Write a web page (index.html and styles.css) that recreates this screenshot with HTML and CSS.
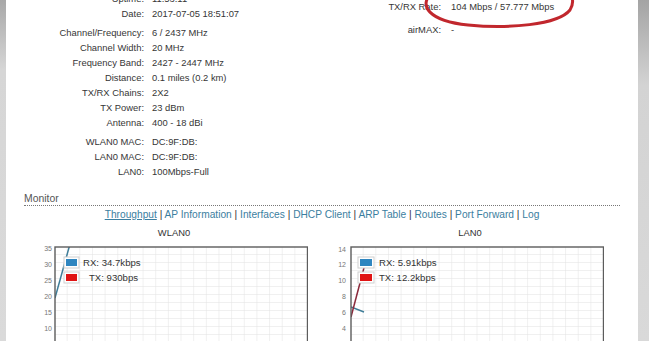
FILE: index.html
```html
<!DOCTYPE html>
<html lang="en">
<head>
    <meta charset="UTF-8">
    <meta name="viewport" content="width=device-width, initial-scale=1.0">
    <title>Main - Status</title>
    <link rel="stylesheet" href="styles.css">
</head>
<body>
    <div class="screen">
        <div class="edge edge-left"></div>

        <main class="content">
            <section class="status">
                <div class="status-col status-left">
                    <div class="group">
                        <div class="row"><span class="label">Uptime:</span><span class="value">11:53:11</span></div>
                        <div class="row"><span class="label">Date:</span><span class="value">2017-07-05 18:51:07</span></div>
                    </div>
                    <div class="group">
                        <div class="row"><span class="label">Channel/Frequency:</span><span class="value">6 / 2437 MHz</span></div>
                        <div class="row"><span class="label">Channel Width:</span><span class="value">20 MHz</span></div>
                        <div class="row"><span class="label">Frequency Band:</span><span class="value">2427 - 2447 MHz</span></div>
                        <div class="row"><span class="label">Distance:</span><span class="value">0.1 miles (0.2 km)</span></div>
                        <div class="row"><span class="label">TX/RX Chains:</span><span class="value">2X2</span></div>
                        <div class="row"><span class="label">TX Power:</span><span class="value">23 dBm</span></div>
                        <div class="row"><span class="label">Antenna:</span><span class="value">400 - 18 dBi</span></div>
                    </div>
                    <div class="group">
                        <div class="row"><span class="label">WLAN0 MAC:</span><span class="value">DC:9F:DB:</span></div>
                        <div class="row"><span class="label">LAN0 MAC:</span><span class="value">DC:9F:DB:</span></div>
                        <div class="row"><span class="label">LAN0:</span><span class="value">100Mbps-Full</span></div>
                    </div>
                </div>
                <div class="status-col status-right">
                    <div class="row"><span class="label">TX/RX Rate:</span><span class="value">104 Mbps / 57.777 Mbps</span></div>
                    <div class="row row-spaced"><span class="label">airMAX:</span><span class="value">-</span></div>
                </div>
            </section>

            <section class="monitor">
                <h2 class="monitor-title">Monitor</h2>
                <nav class="tabs">
                    <a href="#" class="tab active">Throughput</a> |
                    <a href="#" class="tab">AP Information</a> |
                    <a href="#" class="tab">Interfaces</a> |
                    <a href="#" class="tab">DHCP Client</a> |
                    <a href="#" class="tab">ARP Table</a> |
                    <a href="#" class="tab">Routes</a> |
                    <a href="#" class="tab">Port Forward</a> |
                    <a href="#" class="tab">Log</a>
                </nav>

                <div class="charts">
                    <figure class="chart">
                        <figcaption class="chart-title">WLAN0</figcaption>
                        <svg class="plot" width="267" height="101" viewBox="0 0 267 101">
                            <defs>
                                <pattern id="gridWlan" x="14" y="7" width="12.65" height="8" patternUnits="userSpaceOnUse">
                                    <path d="M12.65 0V8M0 8H12.65" stroke="#e2e2e2" stroke-width="1" fill="none"/>
                                </pattern>
                                <clipPath id="clipWlan"><rect x="14" y="7" width="253" height="120"/></clipPath>
                            </defs>
                            <rect x="14" y="7" width="253" height="120" fill="url(#gridWlan)"/>
                            <g class="axis">
                                <text x="11" y="10.5">35</text>
                                <text x="11" y="26.5">30</text>
                                <text x="11" y="42.5">25</text>
                                <text x="11" y="58.5">20</text>
                                <text x="11" y="74.5">15</text>
                                <text x="11" y="90.5">10</text>
                            </g>
                            <g clip-path="url(#clipWlan)">
                                <polyline points="14,58 29,4" class="line-rx"/>
                            </g>
                            <rect x="14" y="7" width="252.5" height="120" class="frame"/>
                            <g class="legend">
                                <rect x="23" y="17" width="15" height="11" class="swatch-box"/>
                                <rect x="25" y="19" width="11" height="7" fill="#2f86c0"/>
                                <text x="42" y="26">RX: 34.7kbps</text>
                                <rect x="23" y="32" width="15" height="11" class="swatch-box"/>
                                <rect x="25" y="34" width="11" height="7" fill="#e01414"/>
                                <text x="48" y="41">TX: 930bps</text>
                            </g>
                        </svg>
                    </figure>

                    <figure class="chart">
                        <figcaption class="chart-title">LAN0</figcaption>
                        <svg class="plot" width="267" height="101" viewBox="0 0 267 101">
                            <defs>
                                <pattern id="gridLan" x="14" y="7" width="12.65" height="8" patternUnits="userSpaceOnUse">
                                    <path d="M12.65 0V8M0 8H12.65" stroke="#e2e2e2" stroke-width="1" fill="none"/>
                                </pattern>
                                <clipPath id="clipLan"><rect x="14" y="7" width="253" height="120"/></clipPath>
                            </defs>
                            <rect x="14" y="7" width="253" height="120" fill="url(#gridLan)"/>
                            <g class="axis">
                                <text x="9" y="11.5">14</text>
                                <text x="9" y="26.5">12</text>
                                <text x="9" y="42.5">10</text>
                                <text x="9" y="58.5">8</text>
                                <text x="9" y="74.5">6</text>
                                <text x="9" y="90.5">4</text>
                            </g>
                            <g clip-path="url(#clipLan)">
                                <polyline points="14,67 27,72" class="line-rx"/>
                                <polyline points="14,77 28,24" class="line-tx"/>
                            </g>
                            <rect x="14" y="7" width="252.5" height="120" class="frame"/>
                            <g class="legend">
                                <rect x="21" y="17" width="16" height="11" class="swatch-box"/>
                                <rect x="23" y="19" width="12" height="7" fill="#2f86c0"/>
                                <text x="42" y="26">RX: 5.91kbps</text>
                                <rect x="21" y="32" width="16" height="11" class="swatch-box"/>
                                <rect x="23" y="34" width="12" height="7" fill="#e01414"/>
                                <text x="42" y="41">TX: 12.2kbps</text>
                            </g>
                        </svg>
                    </figure>
                </div>
            </section>
        </main>

        <div class="edge edge-right"></div>

        <!-- hand-drawn marker around the rate -->
        <svg class="marker" width="649" height="40" viewBox="0 0 649 40">
            <path d="M431 -6 C419 5, 428 21, 468 25 C508 29, 558 25, 570 10 C574 4, 573 -1, 571 -6"/>
        </svg>
    </div>
</body>
</html>
```

FILE: styles.css
```css
html, body {
    margin: 0;
    padding: 0;
    background: #fff;
}
body {
    font-family: "Liberation Sans", Arial, sans-serif;
    font-size: 9.4px;
    color: #363636;
}
.screen {
    position: relative;
    display: flex;
    width: 649px;
    height: 341px;
    overflow: hidden;
}
.edge {
    flex: none;
    background: linear-gradient(#a8a8a8, #d6d6d6 70px, #dadada);
}
.edge-left {
    width: 6px;
}
.edge-right {
    width: 11px;
    background: linear-gradient(#a4a4a4, #d3d3d3 85px, #d9d9d9);
}
.content {
    flex: 1;
    min-width: 0;
}

/* status block */
.status {
    display: flex;
    margin-top: -9px;
}
.status-left {
    width: 294px;
}
.group + .group {
    margin-top: 4px;
}
.row {
    display: grid;
    grid-template-columns: 138px auto;
    column-gap: 8px;
    line-height: 15px;
    white-space: nowrap;
}
.label {
    text-align: right;
}
.status-right {
    padding-top: 8px;
}
.status-right .row {
    grid-template-columns: 141px auto;
    column-gap: 10px;
}
.row-spaced {
    margin-top: 8px;
}

/* monitor */
.monitor {
    margin: 14px 18px 0;
}
.monitor-title {
    margin: 0;
    font-size: 10.4px;
    font-weight: normal;
    line-height: 12px;
    color: #555;
    border-bottom: 1px dotted #777;
}
.tabs {
    margin-top: 2px;
    line-height: 13px;
    font-size: 10.2px;
    text-align: center;
    color: #333;
    white-space: nowrap;
}
.tab {
    color: #3b7ea0;
    text-decoration: none;
}
.tab.active {
    text-decoration: underline;
}
.charts {
    display: flex;
    justify-content: center;
    gap: 29px;
    margin-top: 5px;
}
.chart {
    margin: 0;
    width: 267px;
}
.chart-title {
    text-align: center;
    line-height: 14px;
    color: #333;
}
.plot {
    display: block;
}
.axis text {
    font-size: 7px;
    fill: #777;
    text-anchor: end;
}
.frame {
    fill: none;
    stroke: #5c5c5c;
    stroke-width: 1.4;
}
.line-rx, .line-tx {
    fill: none;
    stroke-width: 1.5;
}
.line-rx {
    stroke: #3f7d98;
}
.line-tx {
    stroke: #8c2a3c;
}
.swatch-box {
    fill: #fff;
    stroke: #d0d0d0;
    stroke-width: 1;
}
.legend text {
    font-size: 9.6px;
    fill: #333;
}

.marker {
    position: absolute;
    left: 0;
    top: 0;
    pointer-events: none;
}
.marker path {
    fill: none;
    stroke: #c1272d;
    stroke-width: 3;
    stroke-linecap: round;
}
```
